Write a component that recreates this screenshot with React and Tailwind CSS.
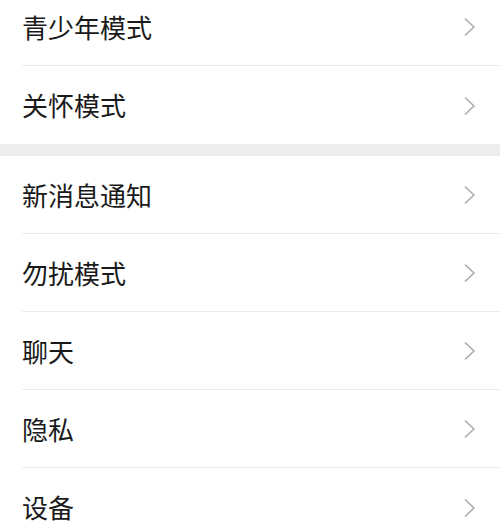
const groups = [
  ['青少年模式', '关怀模式'],
  ['新消息通知', '勿扰模式', '聊天', '隐私', '设备'],
]

function Row({ label, last }) {
  return (
    <div className="flex h-[78px] items-center pl-[22px]">
      <div
        className={`flex h-full flex-1 items-center justify-between pr-[24px] ${
          last ? '' : 'border-b border-[#ececec]'
        }`}
      >
        <span className="text-[26px] leading-none text-[#1a1a1a]">{label}</span>
        <svg width="12" height="18" viewBox="0 0 12 18" fill="none" className="mt-[1px]">
          <path d="M1.5 1 L10 9 L1.5 17" stroke="#adadad" strokeWidth="1.7" strokeLinecap="round" strokeLinejoin="round" />
        </svg>
      </div>
    </div>
  )
}

export default function App() {
  return (
    <div
      className="h-[521px] w-full overflow-hidden bg-white"
      style={{ fontFamily: '"Noto Sans CJK SC", "Noto Sans", sans-serif' }}
    >
      <div className="-mt-[12px]">
        {groups.map((items, gi) => (
          <div key={gi}>
            {gi > 0 && <div className="h-[12px] bg-[#ededed]" />}
            {items.map((label, i) => (
              <Row key={label} label={label} last={i === items.length - 1} />
            ))}
          </div>
        ))}
      </div>
    </div>
  )
}
